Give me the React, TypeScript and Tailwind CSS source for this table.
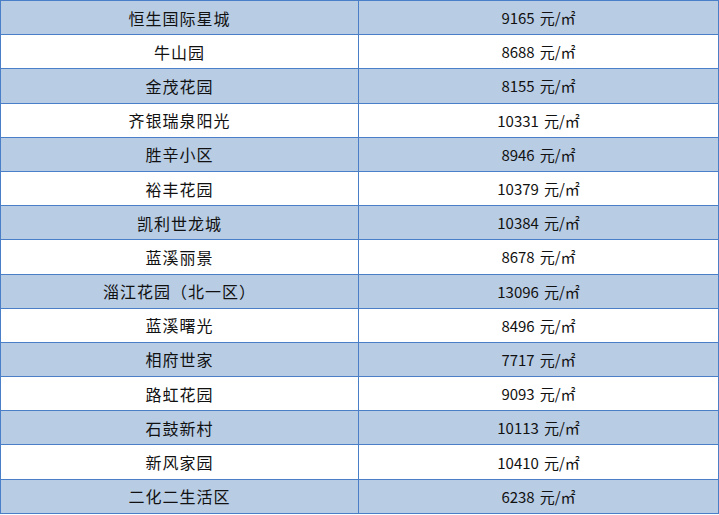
const rows: [string, string][] = [
  ["恒生国际星城", "9165"],
  ["牛山园", "8688"],
  ["金茂花园", "8155"],
  ["齐银瑞泉阳光", "10331"],
  ["胜辛小区", "8946"],
  ["裕丰花园", "10379"],
  ["凯利世龙城", "10384"],
  ["蓝溪丽景", "8678"],
  ["淄江花园（北一区）", "13096"],
  ["蓝溪曙光", "8496"],
  ["相府世家", "7717"],
  ["路虹花园", "9093"],
  ["石鼓新村", "10113"],
  ["新风家园", "10410"],
  ["二化二生活区", "6238"],
]

export default function App() {
  return (
    <div className="w-[719px] h-[515px] bg-white overflow-hidden">
      <table className="w-[719px] border-collapse table-fixed text-[16px] text-[#111] font-['Noto_Sans_CJK_SC',sans-serif]">
        <colgroup>
          <col className="w-[358px]" />
          <col />
        </colgroup>
        <tbody>
          {rows.map(([name, price], i) => (
            <tr key={name} className={`h-[34.2px] ${i % 2 === 0 ? "bg-[#b8cce4]" : "bg-white"}`}>
              <td className="border border-[#4a7ec6] text-center align-middle p-0 leading-none tracking-[1px]">{name}</td>
              <td className="border border-[#4a7ec6] text-center align-middle p-0 leading-none text-[15px]">
                <span className="inline-flex items-baseline gap-[5px]">
                  <span>{price}</span>
                  <span>元/㎡</span>
                </span>
              </td>
            </tr>
          ))}
        </tbody>
      </table>
    </div>
  )
}
